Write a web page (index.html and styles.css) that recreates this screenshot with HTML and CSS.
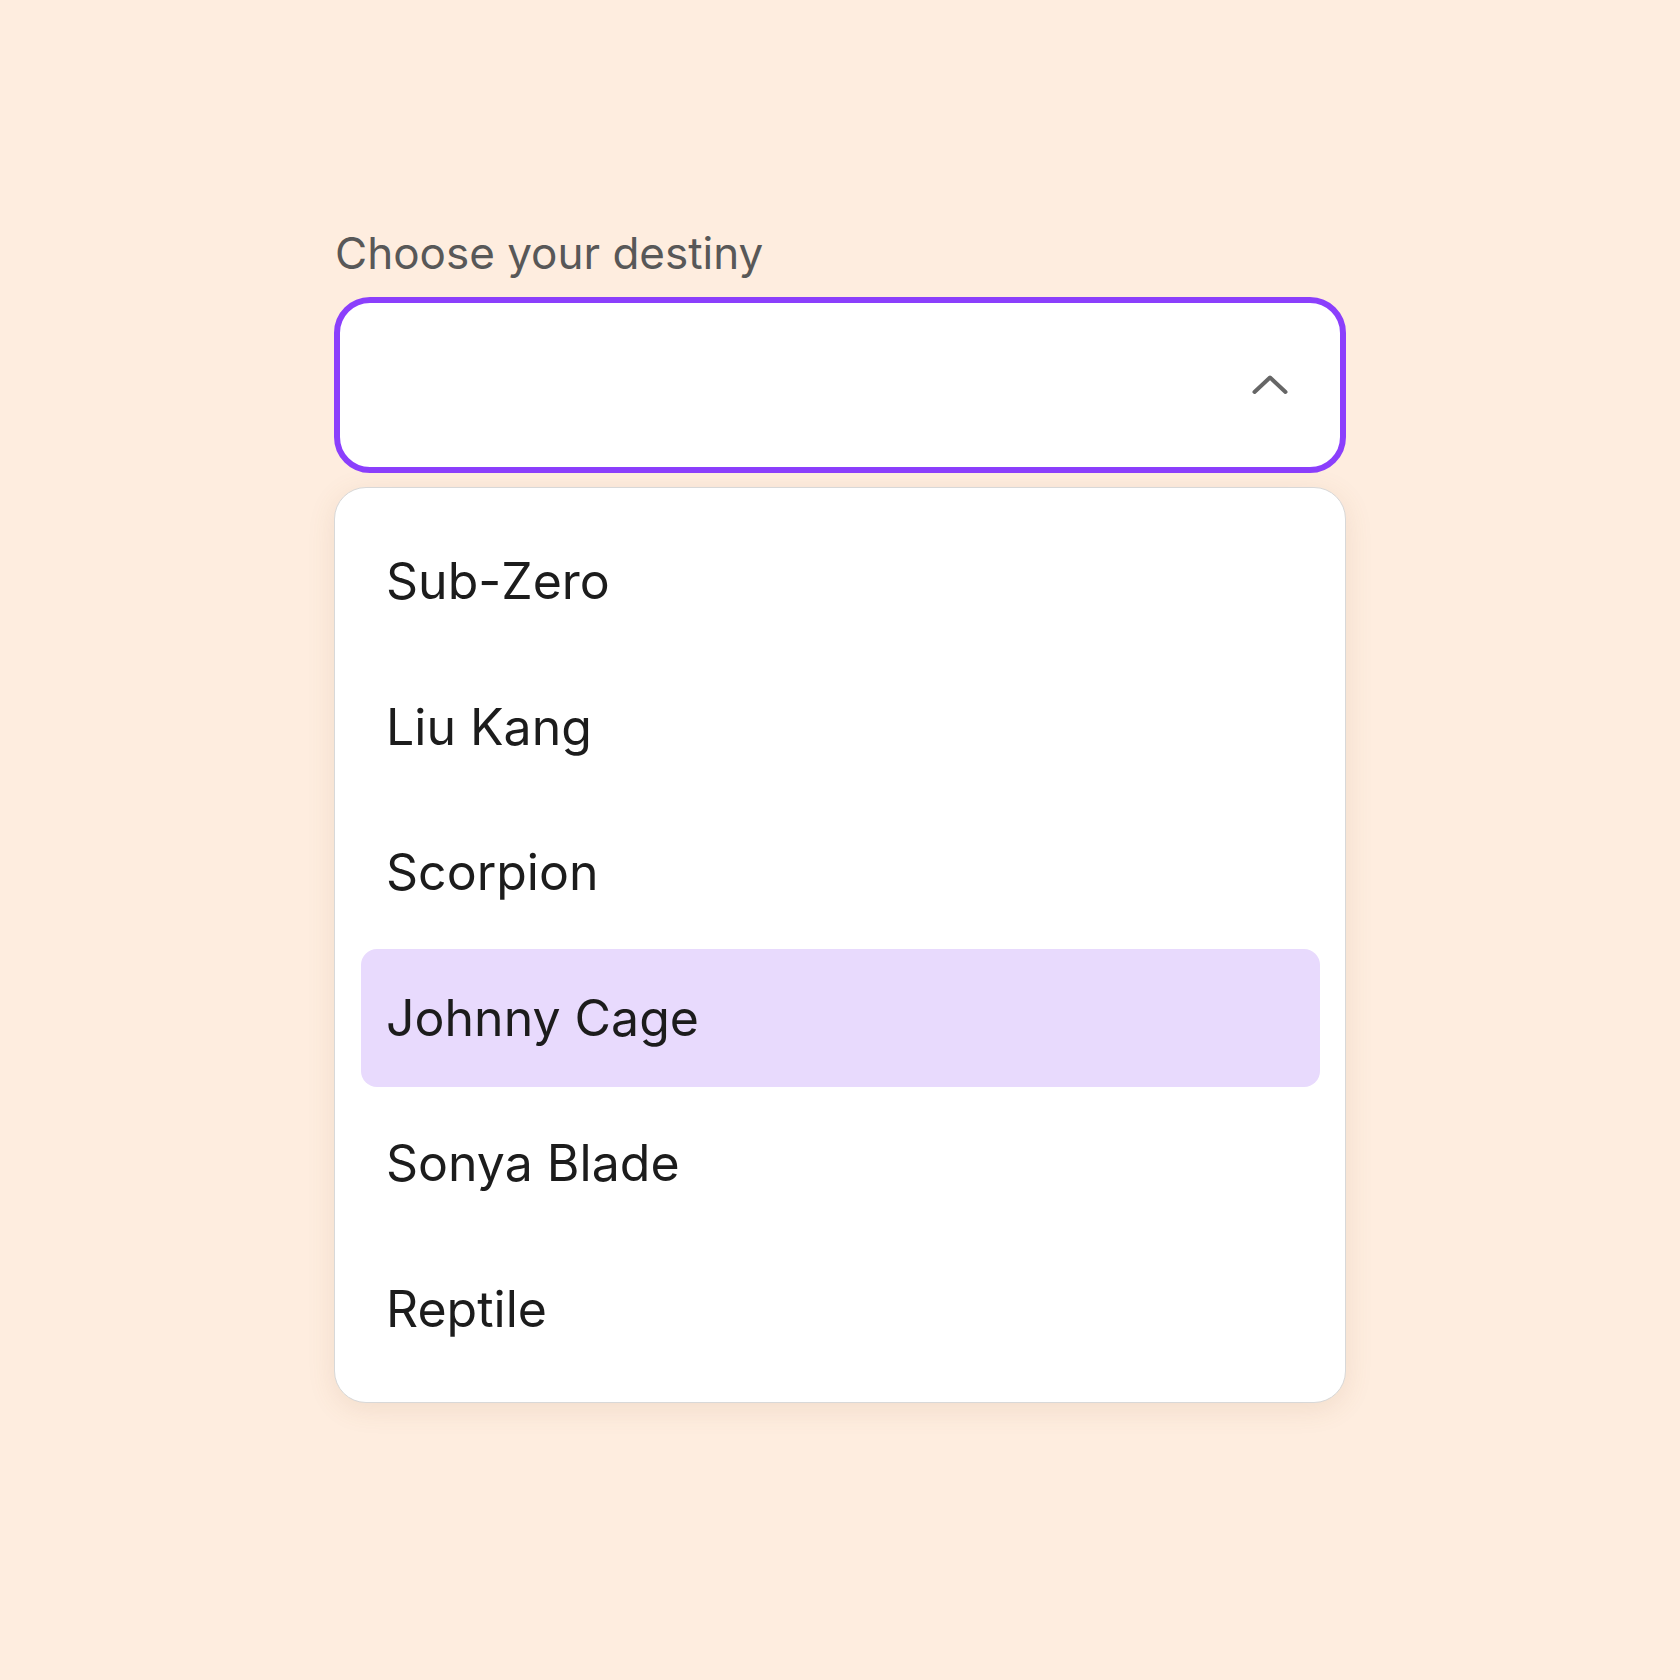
FILE: index.html
```html
<!DOCTYPE html>
<html lang="en">
<head>
<meta charset="utf-8">
<title>Choose your destiny</title>
<link rel="stylesheet" href="styles.css">
</head>
<body>
<main class="page">
  <div class="field">
    <label class="label" for="fighter">Choose your destiny</label>
    <div class="select" id="fighter" role="combobox" aria-expanded="true">
      <svg class="chevron" width="36" height="20" viewBox="0 0 36 20" aria-hidden="true">
        <path d="M2.5 17 L18 2.5 L33.5 17" fill="none" stroke="#666" stroke-width="4" stroke-linecap="round" stroke-linejoin="round"/>
      </svg>
    </div>
    <ul class="menu" role="listbox">
      <li class="item">Sub-Zero</li>
      <li class="item">Liu Kang</li>
      <li class="item">Scorpion</li>
      <li class="item item-active">Johnny Cage</li>
      <li class="item">Sonya Blade</li>
      <li class="item">Reptile</li>
    </ul>
  </div>
</main>
</body>
</html>
```

FILE: styles.css
```css
html, body {
  margin: 0;
  padding: 0;
  background: #feeddf;
  font-family: Inter, "Noto Sans", sans-serif;
}

.page {
  display: flex;
  justify-content: center;
  padding-top: 231px;
  min-height: 1680px;
  box-sizing: border-box;
}

.field {
  width: 1012px;
  display: flex;
  flex-direction: column;
}

.label {
  display: block;
  font-size: 44px;
  line-height: 44px;
  color: #585858;
  margin: 0 0 22px 1px;
}

.select {
  height: 176px;
  box-sizing: border-box;
  border: 6px solid #8b3ffc;
  border-radius: 36px;
  background: #fff;
  display: flex;
  align-items: center;
  justify-content: flex-end;
  padding-right: 52px;
}

.chevron {
  display: block;
}

.menu {
  list-style: none;
  margin: 14px 0 0;
  padding: 24px 25px 24px 26px;
  background: #fff;
  border: 1px solid #d8d8d8;
  border-radius: 32px;
  box-shadow: 0 6px 28px rgba(150, 100, 60, 0.12);
  display: flex;
  flex-direction: column;
  gap: 7.5px;
}

.item {
  height: 138px;
  display: flex;
  align-items: center;
  padding-left: 25px;
  font-size: 50px;
  color: #1c1c1c;
  border-radius: 16px;
}

.item-active {
  background: #e8dafd;
}
```
